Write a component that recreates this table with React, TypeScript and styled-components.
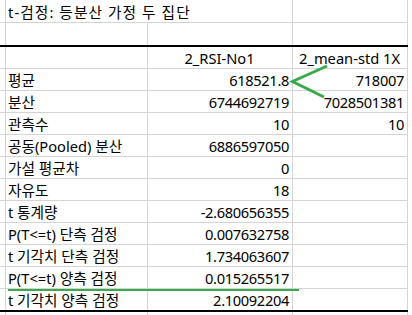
import React from 'react';
import styled, {createGlobalStyle} from 'styled-components';

const GlobalStyle = createGlobalStyle`
	html, body {
		margin: 0;
		padding: 0;
		background: #ffffff;
	}
	body {
		font-family: "Noto Sans", "Noto Sans CJK KR", sans-serif;
	}
`;

const Sheet = styled.div`
	position: relative;
	width: 412px;
	height: 315px;
	overflow: hidden;
	background-color: #ffffff;
	color: #000000;
	font-size: 14.67px;
`;

const Row = styled.div<{$h: number; $thick?: boolean}>`
	display: grid;
	grid-template-columns: 6px 142px 145px 115px;
	width: 408px;
	height: ${p => p.$h}px;
	border-bottom: ${p => (p.$thick ? '2px solid #000000' : '1px solid #d4d4d4')};
`;

const Cell = styled.div<{$align?: 'left' | 'right' | 'center'; $span?: number}>`
	display: flex;
	align-items: center;
	justify-content: ${p =>
		p.$align === 'right' ? 'flex-end' : p.$align === 'center' ? 'center' : 'flex-start'};
	grid-column: span ${p => p.$span || 1};
	padding: 1px 3px 0 2px;
	box-sizing: border-box;
	border-right: 1px solid #d4d4d4;
	white-space: nowrap;
	line-height: 1;
`;

const Num = styled(Cell)`
	justify-content: flex-end;
	letter-spacing: -0.35px;
`;

const Title = styled(Cell)`
	padding-top: 3px;
	letter-spacing: 1.1px;
	overflow: visible;
`;

const Highlight = styled.div`
	position: absolute;
	left: 8px;
	top: 289px;
	width: 291px;
	height: 2px;
	background-color: #3aa94c;
`;

const Arrow = styled.svg`
	position: absolute;
	left: 0;
	top: 0;
	pointer-events: none;
`;

const rows: [string, string, string][] = [
	['평균', '618521.8', '718007'],
	['분산', '6744692719', '7028501381'],
	['관측수', '10', '10'],
	['공동(Pooled) 분산', '6886597050', ''],
	['가설 평균차', '0', ''],
	['자유도', '18', ''],
	['t 통계량', '-2.680656355', ''],
	['P(T<=t) 단측 검정', '0.007632758', ''],
	['t 기각치 단측 검정', '1.734063607', ''],
	['P(T<=t) 양측 검정', '0.015265517', ''],
	['t 기각치 양측 검정', '2.10092204', ''],
];

const App = () => (
	<Sheet>
		<GlobalStyle />
		<Row $h={22}>
			<Cell />
			<Title $span={2}>t-검정: 등분산 가정 두 집단</Title>
			<Cell />
		</Row>
		<Row $h={22} $thick>
			<Cell />
			<Cell />
			<Cell />
			<Cell />
		</Row>
		<Row $h={21}>
			<Cell />
			<Cell />
			<Cell $align="center">2_RSI-No1</Cell>
			<Cell $align="center">2_mean-std 1X</Cell>
		</Row>
		{rows.map(([label, a, b], i) => (
			<Row key={label} $h={21} $thick={i === rows.length - 1}>
				<Cell />
				<Cell>{label}</Cell>
				<Num>{a}</Num>
				<Num>{b}</Num>
			</Row>
		))}
		<Row $h={10}>
			<Cell />
			<Cell />
			<Cell />
			<Cell />
		</Row>
		<Highlight />
		<Arrow width="412" height="315" viewBox="0 0 412 315">
			<polyline
				points="327,66 292.5,81.5 324,97"
				fill="none"
				stroke="#3aa94c"
				strokeWidth="3"
				strokeLinejoin="miter"
			/>
		</Arrow>
	</Sheet>
);

export default App;
